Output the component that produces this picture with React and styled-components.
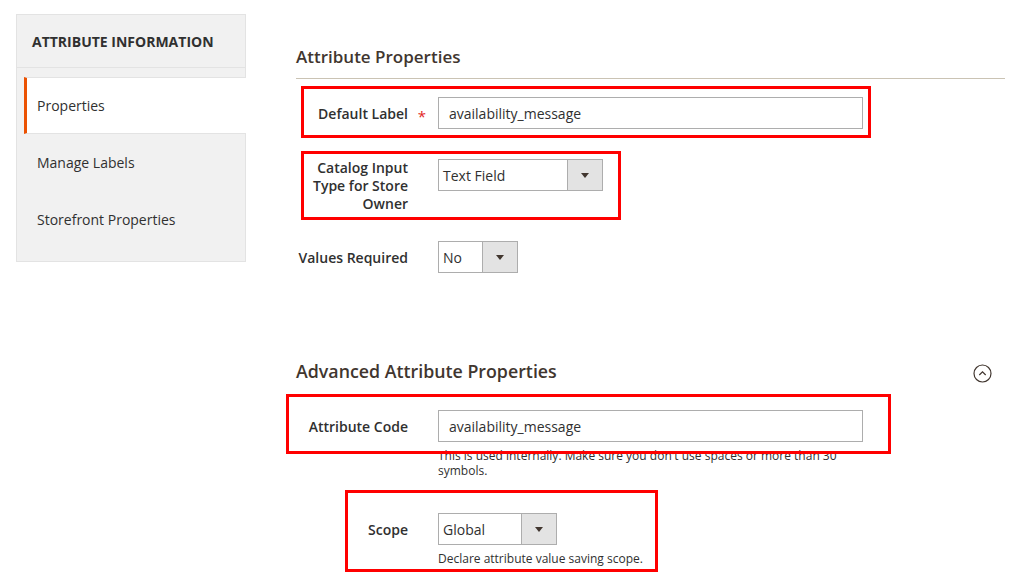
import React from "react";
import styled, { createGlobalStyle } from "styled-components";

const GlobalStyle = createGlobalStyle`
  body {
    margin: 0;
    background: #fff;
    font-family: "Open Sans", "Liberation Sans", sans-serif;
    color: #303030;
  }
`;

const Page = styled.div`
  display: flex;
  gap: 50px;
  padding: 14px 16px 0 16px;
`;

// left navigation
const Sidebar = styled.nav`
  width: 230px;
  box-sizing: border-box;
  align-self: flex-start;
  background: #f1f1f1;
  border: 1px solid #e3e3e3;
  padding-bottom: 13px;
`;

const NavTitle = styled.div`
  height: 53px;
  box-sizing: border-box;
  padding: 0 15px;
  display: flex;
  align-items: center;
  font-size: 14px;
  font-weight: 700;
  text-transform: uppercase;
  color: #303030;
  border-bottom: 1px solid #e3e3e3;
`;

const NavList = styled.div`
  margin-top: 9px;
  display: flex;
  flex-direction: column;
`;

const NavItem = styled.div`
  height: 57px;
  box-sizing: border-box;
  display: flex;
  align-items: center;
  margin-left: 7px;
  padding-left: 13px;
  font-size: 14px;
  color: #303030;
  ${(p) =>
    p.$active &&
    `
    background: #fff;
    padding-left: 10px;
    margin-right: -1px;
    border-left: 3px solid #eb5202;
    border-top: 1px solid #e3e3e3;
    border-bottom: 1px solid #e3e3e3;
  `}
`;

// main form
const Main = styled.main`
  width: 709px;
`;

const SectionTitle = styled.div`
  display: flex;
  justify-content: space-between;
  align-items: center;
  margin-top: ${(p) => p.$mt}px;
  margin-bottom: ${(p) => p.$mb}px;
  padding-bottom: ${(p) => (p.$line ? 9 : 0)}px;
  border-bottom: ${(p) => (p.$line ? "1px solid #cac3b4" : "none")};
  font-size: ${(p) => p.$size || 17}px;
  font-weight: 600;
  line-height: 24px;
  color: #41362f;
`;

const Toggle = styled.svg`
  margin-right: 13px;
  margin-top: 6px;
`;

const Field = styled.div`
  position: relative;
  display: flex;
  margin-bottom: 30px;
`;

const Label = styled.label`
  position: relative;
  width: 112px;
  padding: ${(p) => (p.$multi ? 0 : 8)}px 30px 0 0;
  margin-bottom: ${(p) => (p.$multi ? -2 : 0)}px;
  text-align: right;
  font-size: 14px;
  font-weight: 600;
  line-height: 18px;
  color: #303030;

  ${(p) =>
    p.$required &&
    `
    &::after {
      content: "*";
      position: absolute;
      right: 12px;
      top: 10px;
      color: #e22626;
      font-size: 15px;
      font-weight: 400;
    }
  `}
`;

const Control = styled.div`
  display: flex;
  flex-direction: column;
`;

const Input = styled.div`
  width: 425px;
  height: 32px;
  box-sizing: border-box;
  border: 1px solid #adadad;
  padding: 0 10px;
  display: flex;
  align-items: center;
  font-size: 14px;
  color: #303030;
`;

const Select = styled.div`
  width: ${(p) => p.$w}px;
  height: 32px;
  box-sizing: border-box;
  border: 1px solid #adadad;
  display: flex;
  font-size: 14px;
  color: #303030;
`;

const SelectValue = styled.span`
  flex: 1;
  display: flex;
  align-items: center;
  padding-left: 4px;
`;

const SelectButton = styled.span`
  width: 34px;
  background: #e3e3e3;
  border-left: 1px solid #adadad;
  display: flex;
  align-items: center;
  justify-content: center;

  &::before {
    content: "";
    border-left: 4px solid transparent;
    border-right: 4px solid transparent;
    border-top: 5px solid #41362f;
  }
`;

const Note = styled.div`
  width: 425px;
  margin: 6px 0 ${(p) => p.$mb || 0}px;
  font-size: 12px;
  line-height: 15px;
  color: #303030;
`;

// red annotation frame drawn over a row
const Highlight = styled.span`
  position: absolute;
  left: ${(p) => p.$l}px;
  top: ${(p) => p.$t}px;
  width: ${(p) => p.$w}px;
  height: ${(p) => p.$h}px;
  box-sizing: border-box;
  border: 3px solid #ff0000;
  pointer-events: none;
`;

function Dropdown({ value, width }) {
  return (
    <Select $w={width}>
      <SelectValue>{value}</SelectValue>
      <SelectButton />
    </Select>
  );
}

export default function App() {
  return (
    <>
      <GlobalStyle />
      <Page>
        <Sidebar>
          <NavTitle>Attribute Information</NavTitle>
          <NavList>
            <NavItem $active>Properties</NavItem>
            <NavItem>Manage Labels</NavItem>
            <NavItem>Storefront Properties</NavItem>
          </NavList>
        </Sidebar>

        <Main>
          <SectionTitle $mt={31} $mb={18} $line>
            Attribute Properties
          </SectionTitle>

          <Field>
            <Label $required>Default Label</Label>
            <Control>
              <Input>availability_message</Input>
            </Control>
            <Highlight $l={5} $t={-11} $w={570} $h={52} />
          </Field>

          <Field>
            <Label $multi>Catalog Input Type for Store Owner</Label>
            <Control>
              <Dropdown value="Text Field" width={165} />
            </Control>
            <Highlight $l={5} $t={-8} $w={320} $h={69} />
          </Field>

          <Field>
            <Label>Values Required</Label>
            <Control>
              <Dropdown value="No" width={80} />
            </Control>
          </Field>

          <SectionTitle $mt={85} $mb={27} $size={17.8}>
            Advanced Attribute Properties
            <Toggle width="19" height="19" viewBox="0 0 19 19">
              <circle cx="9.5" cy="9.5" r="8.5" fill="none" stroke="#41362f" strokeWidth="1.2" />
              <path d="M6.3 11 L9.5 7.8 L12.7 11" fill="none" stroke="#41362f" strokeWidth="1.2" />
            </Toggle>
          </SectionTitle>

          <Field>
            <Label>Attribute Code</Label>
            <Control>
              <Input>availability_message</Input>
              <Note $mb={5}>
                This is used internally. Make sure you don't use spaces or more than 30 symbols.
              </Note>
            </Control>
            <Highlight $l={-10} $t={-16} $w={605} $h={60} />
          </Field>

          <Field>
            <Label>Scope</Label>
            <Control>
              <Dropdown value="Global" width={119} />
              <Note>Declare attribute value saving scope.</Note>
            </Control>
            <Highlight $l={49} $t={-23} $w={313} $h={82} />
          </Field>
        </Main>
      </Page>
    </>
  );
}
